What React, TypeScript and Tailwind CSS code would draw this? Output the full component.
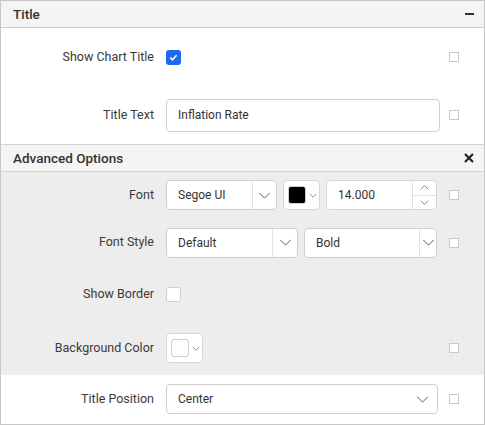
import type { ReactNode } from 'react';

const font = { fontFamily: 'Roboto, "Liberation Sans", sans-serif' };

function Chevron({ className = 'h-[7px] w-[13px]' }: { className?: string }) {
  return (
    <svg viewBox="0 0 14 8" className={className} fill="none" stroke="#555" strokeWidth="1.1">
      <path d="M1 1l6 6 6-6" />
    </svg>
  );
}

function SmallBox() {
  return <span className="block h-[10px] w-[10px] border border-[#c8c8c8] bg-white" />;
}

function Row({
  label,
  height,
  children,
  extra = true
}: {
  label: string;
  height: string;
  children: ReactNode;
  extra?: boolean;
}) {
  return (
    <div className={`flex items-center ${height}`}>
      <div className="w-[153px] shrink-0 text-right text-[12.5px] text-[#3a3a3a]">{label}</div>
      <div className="ml-[12px] flex flex-1 items-center gap-[6px]">{children}</div>
      <div className="mr-[25px] flex w-[10px] justify-center">{extra && <SmallBox />}</div>
    </div>
  );
}

function Select({ value, width, btn }: { value: string; width: string; btn: string }) {
  return (
    <div className={`flex h-[30px] ${width} items-stretch rounded-[4px] border border-[#cfcfcf] bg-white`}>
      <div className="flex flex-1 items-center pl-[11px] text-[12px] text-[#333]">{value}</div>
      <div className={`flex ${btn} items-center justify-center border-l border-[#e2e2e2]`}>
        <Chevron />
      </div>
    </div>
  );
}

function ColorPick({ swatch }: { swatch: string }) {
  return (
    <div className="flex h-[30px] w-[37px] items-center rounded-[4px] border border-[#d6d6d6] bg-white pl-[4px]">
      <span className={`block h-[18px] w-[18px] rounded-[3px] border border-[#cfcfcf] ${swatch}`} />
      <Chevron className="ml-[3px] h-[5px] w-[8px]" />
    </div>
  );
}

export default function App() {
  return (
    <div className="h-[425px] w-[485px] border border-[#c6c6c6] bg-white" style={font}>
      <div className="flex h-[27px] items-center justify-between border-b border-[#cfcfcf] bg-[#f4f4f4] pl-[12px] pr-[10px]">
        <span className="text-[13.5px] font-medium text-[#333]">Title</span>
        <span className="block h-[1.5px] w-[9px] bg-[#333]" />
      </div>

      <Row label="Show Chart Title" height="h-[58px]">
        <span className="flex h-[15px] w-[15px] items-center justify-center rounded-[3px] bg-[#1c6af0]">
          <svg viewBox="0 0 10 10" className="h-[9px] w-[9px]" fill="none" stroke="white" strokeWidth="1.8">
            <path d="M1.5 5.2l2.3 2.3 4.7-5" />
          </svg>
        </span>
      </Row>

      <Row label="Title Text" height="h-[58px]">
        <div className="flex h-[33px] w-[274px] items-center rounded-[4px] border border-[#cfcfcf] bg-white pl-[11px] text-[12px] text-[#333]">
          Inflation Rate
        </div>
      </Row>

      <div className="flex h-[28px] items-center justify-between border-y border-[#d2d2d2] bg-[#f4f4f4] pl-[12px] pr-[10px]">
        <span className="text-[13.5px] font-medium text-[#333]">Advanced Options</span>
        <svg viewBox="0 0 10 10" className="h-[10px] w-[10px]" stroke="#222" strokeWidth="2.2">
          <path d="M1 1l8 8M9 1l-8 8" />
        </svg>
      </div>

      <div className="bg-[#ededed]">
        <Row label="Font" height="h-[46px]">
          <Select value="Segoe UI" width="w-[111px]" btn="w-[24px]" />
          <ColorPick swatch="bg-black" />
          <div className="flex h-[30px] w-[111px] items-stretch rounded-[4px] border border-[#d6d6d6] bg-white">
            <div className="flex flex-1 items-center pl-[11px] text-[12px] text-[#333]">14.000</div>
            <div className="flex w-[24px] flex-col border-l border-[#e2e2e2]">
              <div className="flex flex-1 items-center justify-center border-b border-[#e2e2e2]">
                <Chevron className="h-[5px] w-[9px] rotate-180" />
              </div>
              <div className="flex flex-1 items-center justify-center">
                <Chevron className="h-[5px] w-[9px]" />
              </div>
            </div>
          </div>
        </Row>
        <Row label="Font Style" height="h-[49px]">
          <Select value="Default" width="w-[132px]" btn="w-[25px]" />
          <Select value="Bold" width="w-[133px]" btn="w-[17px]" />
        </Row>
        <Row label="Show Border" height="h-[54px]" extra={false}>
          <span className="block h-[15px] w-[15px] rounded-[3px] border border-[#cfcfcf] bg-white" />
        </Row>
        <Row label="Background Color" height="h-[54px]">
          <ColorPick swatch="bg-white" />
        </Row>
      </div>

      <Row label="Title Position" height="h-[48px]">
        <div className="flex h-[30px] w-[272px] items-center justify-between rounded-[4px] border border-[#cfcfcf] bg-white pl-[11px] pr-[8px] text-[12px] text-[#333]">
          Center
          <Chevron />
        </div>
      </Row>
    </div>
  );
}
